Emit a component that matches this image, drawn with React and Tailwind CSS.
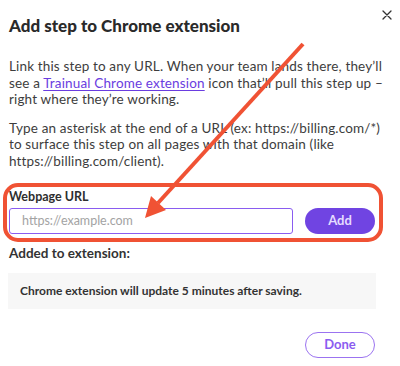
export default function App() {
  return (
    <div
      className="relative w-[400px] h-[366px] bg-white overflow-hidden text-[#3d3d3d]"
      style={{ fontFamily: 'Lato, "Liberation Sans", sans-serif' }}
    >
      <div className="pl-[9px] pr-[25px] pt-[14px]">
        <div className="flex items-center h-[24px]">
          <h1 className="text-[17px] font-black text-[#2a2a2a] leading-[24px] whitespace-nowrap">
            Add step to Chrome extension
          </h1>
        </div>
        <p className="mt-[20px] text-[13.5px] leading-[16.5px] whitespace-nowrap tracking-[0.15px]">
          Link this step to any URL. When your team lands there, they’ll
          <br />
          see a{" "}
          <a className="text-[#6a3de0] underline decoration-[#6a3de0] underline-offset-2">
            Trainual Chrome extension
          </a>{" "}
          icon that’ll pull this step up –
          <br />
          right where they’re working.
        </p>
        <p className="mt-[12px] text-[13.5px] leading-[16.5px] whitespace-nowrap tracking-[0.15px]">
          Type an asterisk at the end of a URL (ex: https://billing.com/*)
          <br />
          to surface this step on all pages with that domain (like
          <br />
          https://billing.com/client).
        </p>
        <div className="mt-[20px] text-[12.5px] leading-[16px] font-bold text-[#2e2e2e]">Webpage URL</div>
        <div className="mt-[3px] flex items-center gap-[12px]">
          <div className="w-[284px] h-[26px] border border-[#8a5cf0] rounded-[3px] flex items-center pl-[12px] text-[12.5px] text-[#a3a3a3]">
            https://example.com
          </div>
          <div className="w-[70px] h-[26px] rounded-full bg-[#7044e2] flex items-center justify-center text-[13px] font-bold text-[#e4dcff]">
            Add
          </div>
        </div>
        <div className="mt-[10px] text-[13.5px] leading-[18px] font-bold text-[#333]">Added to extension:</div>
        <div className="mt-[11px] -ml-px h-[36px] w-[368px] bg-[#f7f7f7] flex items-center pl-[12px] text-[12px] font-bold text-[#333]">
          Chrome extension will update 5 minutes after saving.
        </div>
        <div className="mt-[23px] flex justify-end">
          <div className="w-[70px] h-[26px] rounded-full border border-[#9b73f0] flex items-center justify-center text-[13px] font-bold text-[#8a5cf0]">
            Done
          </div>
        </div>
      </div>

      <svg className="absolute right-[8px] top-[10px]" width="10" height="10" viewBox="0 0 10 10">
        <path d="M1 1 L9 9 M9 1 L1 9" stroke="#333" strokeWidth="1.3" strokeLinecap="round" />
      </svg>

      <svg className="absolute inset-0 pointer-events-none" width="400" height="366" viewBox="0 0 400 366">
        <rect x="5" y="185" width="376" height="55" rx="13" fill="none" stroke="#f05234" strokeWidth="4" />
        <line x1="303" y1="44" x2="158" y2="203" stroke="#f05234" strokeWidth="4" strokeLinecap="butt" />
        <polygon points="145,218 151,196 166,210" fill="#f05234" />
      </svg>
    </div>
  );
}
